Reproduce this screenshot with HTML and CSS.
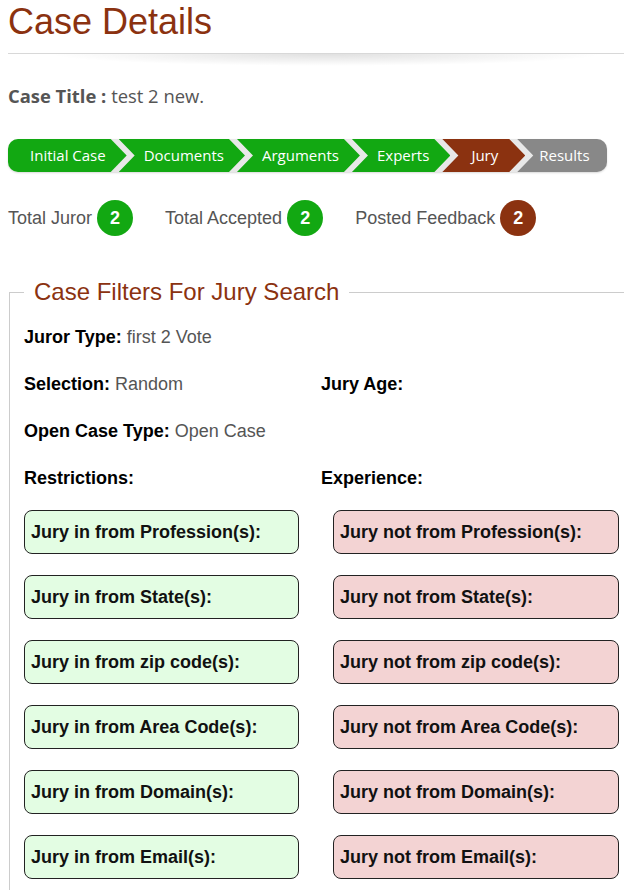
FILE: index.html
```html
<!DOCTYPE html>
<html lang="en">
<head>
<meta charset="utf-8">
<title>Case Details</title>
<link rel="stylesheet" href="styles.css">
</head>
<body>
<div class="page">
<h1 class="page-title">Case Details</h1>
<div class="divider"></div>
<p class="case-title"><b>Case Title :</b> test 2 new.</p>
<ol class="steps">
  <li class="step step-first done">Initial Case</li>
  <li class="step done">Documents</li>
  <li class="step done">Arguments</li>
  <li class="step done">Experts</li>
  <li class="step step-jury current">Jury</li>
  <li class="step step-last todo">Results</li>
</ol>
<div class="totals">
  <div class="total">Total Juror <span class="badge green">2</span></div>
  <div class="total">Total Accepted <span class="badge green">2</span></div>
  <div class="total">Posted Feedback <span class="badge brown">2</span></div>
</div>
<fieldset class="filters">
  <legend>Case Filters For Jury Search</legend>
  <div class="info-grid">
    <div class="info"><b>Juror Type:</b> first 2 Vote</div>
    <div class="info"></div>
    <div class="info"><b>Selection:</b> Random</div>
    <div class="info"><b>Jury Age:</b></div>
    <div class="info"><b>Open Case Type:</b> Open Case</div>
    <div class="info"></div>
    <div class="info"><b>Restrictions:</b></div>
    <div class="info"><b>Experience:</b></div>
  </div>
  <div class="box-grid">
    <div class="box in">Jury in from Profession(s):</div>
    <div class="box out">Jury not from Profession(s):</div>
    <div class="box in">Jury in from State(s):</div>
    <div class="box out">Jury not from State(s):</div>
    <div class="box in">Jury in from zip code(s):</div>
    <div class="box out">Jury not from zip code(s):</div>
    <div class="box in">Jury in from Area Code(s):</div>
    <div class="box out">Jury not from Area Code(s):</div>
    <div class="box in">Jury in from Domain(s):</div>
    <div class="box out">Jury not from Domain(s):</div>
    <div class="box in">Jury in from Email(s):</div>
    <div class="box out">Jury not from Email(s):</div>
  </div>
</fieldset>
</div>
</body>
</html>
```
FILE: styles.css
```css
html, body {
  overflow: hidden;
}
body {
  margin: 0;
  background: #fff;
  font-family: "Liberation Sans", Arial, sans-serif;
  color: #555;
}
.page {
  padding: 0 0 0 8px;
}
.page-title {
  margin: 2px 0 0;
  font-size: 36px;
  font-weight: normal;
  line-height: 40px;
  color: #8b3210;
}
.divider {
  position: relative;
  margin: 11px 0 0;
  height: 1px;
  background: #d8d8d8;
}
.divider::after {
  content: "";
  position: absolute;
  left: 40px;
  right: 20px;
  top: 1px;
  height: 12px;
  background: radial-gradient(ellipse at 50% 0, rgba(0,0,0,0.12), rgba(0,0,0,0) 70%);
}
.case-title {
  margin: 29px 0 0;
  font-family: "Open Sans", sans-serif;
  font-size: 18.4px;
  line-height: 25px;
  color: #555;
}
.case-title b {
  font-weight: 700;
}
.steps {
  display: flex;
  list-style: none;
  margin: 31px 0 0;
  padding: 0;
  width: 599px;
  height: 33px;
  background: #e8e8e8;
  border-radius: 10px;
  overflow: hidden;
  box-shadow: 0 1px 2px rgba(0,0,0,0.15);
}
.step {
  padding: 0 21px 0 25px;
  margin-left: -8px;
  line-height: 33px;
  font-family: "Open Sans", sans-serif;
  font-size: 15px;
  color: #fff;
  white-space: nowrap;
  clip-path: polygon(0 0, calc(100% - 16px) 0, 100% 50%, calc(100% - 16px) 100%, 0 100%, 16px 50%);
}
.step-first {
  margin-left: 0;
  padding-left: 22px;
  clip-path: polygon(0 0, calc(100% - 16px) 0, 100% 50%, calc(100% - 16px) 100%, 0 100%);
}
.step-jury {
  padding-left: 29px;
  padding-right: 27px;
}
.step-last {
  flex: 1;
  padding-left: 22px;
  clip-path: polygon(0 0, 100% 0, 100% 100%, 0 100%, 16px 50%);
}
.done { background: #12a812; }
.current { background: #8b3210; }
.todo { background: #888; }
.totals {
  display: flex;
  align-items: center;
  margin-top: 28px;
  height: 36px;
}
.total {
  display: flex;
  align-items: center;
  gap: 5px;
  margin-right: 32px;
  font-size: 18px;
  color: #555;
}
.badge {
  display: inline-flex;
  align-items: center;
  justify-content: center;
  width: 36px;
  height: 36px;
  border-radius: 50%;
  color: #fff;
  font-weight: bold;
  font-size: 18px;
}
.green { background: #12a812; }
.brown { background: #8b3210; }
.filters {
  margin: 42px 0 0 1px;
  padding: 0 0 0 14px;
  border: 1px solid #ccc;
  border-right: none;
  border-bottom: none;
  min-width: 0;
}
.filters legend {
  padding: 0 10px;
  font-size: 24px;
  line-height: 28px;
  color: #8b3210;
}
.info-grid {
  display: grid;
  grid-template-columns: 297px 1fr;
  row-gap: 27px;
  padding-top: 21px;
}
.info {
  font-size: 18px;
  line-height: 20px;
  min-height: 20px;
  color: #555;
}
.info b {
  color: #000;
}
.box-grid {
  display: grid;
  grid-template-columns: 297px 1fr;
  row-gap: 21px;
  margin-top: 22px;
  padding-bottom: 20px;
}
.box {
  display: flex;
  align-items: center;
  box-sizing: border-box;
  height: 44px;
  padding-left: 6px;
  border: 1px solid #222;
  border-radius: 8px;
  font-size: 18px;
  font-weight: bold;
  color: #111;
}
.box.in {
  width: 275px;
  background: #e3fde3;
}
.box.out {
  width: 286px;
  margin-left: 12px;
  background: #f3d3d3;
}
```
